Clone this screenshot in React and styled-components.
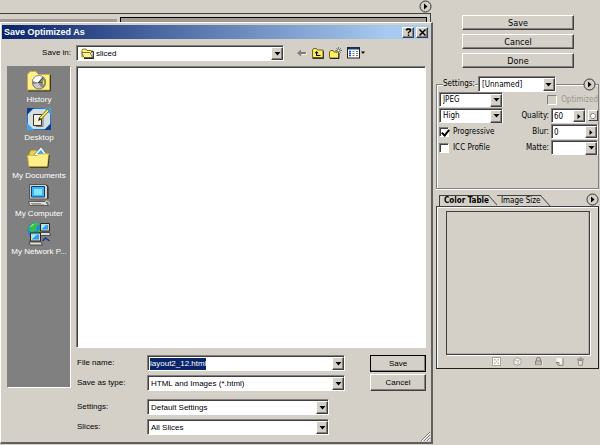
import React, { useEffect, useRef } from 'react';
import styled, { createGlobalStyle, css } from 'styled-components';

const App = () => (
  <Page>
    <GlobalStyle />
    <Preview>
      <PreviewHeader>
        <RoundButton aria-label="Preview menu"><PlayIcon /></RoundButton>
      </PreviewHeader>
      <Strip>
        <StripRuler />
        <StripCanvas />
      </Strip>
      <SaveDialog />
    </Preview>
    <Side>
      <ActionList>
        <ActionButton>Save</ActionButton>
        <ActionButton>Cancel</ActionButton>
        <ActionButton>Done</ActionButton>
      </ActionList>
      <SettingsPanel />
      <ColorPanel />
    </Side>
  </Page>
);

const SaveDialog = () => {
  const fileName = useRef(null);

  useEffect(() => {
    fileName.current.focus();
    fileName.current.select();
  }, []);

  return (
    <Dialog role="dialog" aria-labelledby="dialog-title">
      <TitleBar>
        <Title id="dialog-title">Save Optimized As</Title>
        <TitleButton aria-label="Help"><HelpGlyph /></TitleButton>
        <TitleButton aria-label="Close"><CloseGlyph /></TitleButton>
      </TitleBar>
      <LookIn>
        <LookInLabel htmlFor="save-in">Save in:</LookInLabel>
        <LookInBox>
          <FolderIcon />
          <Select id="save-in"><option>sliced</option></Select>
          <DropArrow />
        </LookInBox>
        <Tools>
          <ToolButton aria-label="Back"><BackIcon /></ToolButton>
          <ToolButton aria-label="Up one level"><UpIcon /></ToolButton>
          <ToolButton aria-label="New folder"><NewFolderIcon /></ToolButton>
          <ToolButton aria-label="Views"><ViewIcon /></ToolButton>
        </Tools>
      </LookIn>
      <DialogBody>
        <Places>
          <Place><HistoryIcon />History</Place>
          <Place><DesktopIcon />Desktop</Place>
          <Place><DocumentsIcon />My Documents</Place>
          <Place><ComputerIcon />My Computer</Place>
          <Place><NetworkIcon />My Network P...</Place>
        </Places>
        <DialogMain>
          <FileList />
          <FormArea>
            <Fields>
              <Field>
                <FieldLabel htmlFor="file-name">File name:</FieldLabel>
                <Combo>
                  <TextInput id="file-name" ref={fileName} defaultValue="layout2_12.html" />
                  <DropArrow />
                </Combo>
              </Field>
              <Field>
                <FieldLabel htmlFor="save-type">Save as type:</FieldLabel>
                <Combo>
                  <Select id="save-type"><option>HTML and Images (*.html)</option></Select>
                  <DropArrow />
                </Combo>
              </Field>
              <Field narrow first>
                <FieldLabel htmlFor="settings">Settings:</FieldLabel>
                <Combo>
                  <Select id="settings"><option>Default Settings</option></Select>
                  <DropArrow />
                </Combo>
              </Field>
              <Field narrow>
                <FieldLabel htmlFor="slices">Slices:</FieldLabel>
                <Combo>
                  <Select id="slices"><option>All Slices</option></Select>
                  <DropArrow />
                </Combo>
              </Field>
            </Fields>
            <DialogButtons>
              <DialogButton primary>Save</DialogButton>
              <DialogButton>Cancel</DialogButton>
            </DialogButtons>
          </FormArea>
        </DialogMain>
      </DialogBody>
      <Grip viewBox="0 0 9 9">
        <path d="M0 9L9 0M3 9L9 3M6 9L9 6" stroke="#808080" />
        <path d="M1 9L9 1M4 9L9 4M7 9L9 7" stroke="#fff" />
      </Grip>
    </Dialog>
  );
};

const SettingsPanel = () => (
  <Group>
    <GroupHead>
      <SmallLabel htmlFor="preset">Settings:</SmallLabel>
      <PresetCombo>
        <Select id="preset"><option>[Unnamed]</option></Select>
        <DropArrow />
      </PresetCombo>
      <GroupRule />
      <RoundButton aria-label="Settings menu"><PlayIcon /></RoundButton>
    </GroupHead>
    <GroupBody>
      <OptionColumn>
        <OptionCombo>
          <Select aria-label="Format"><option>JPEG</option></Select>
          <DropArrow />
        </OptionCombo>
        <OptionCombo>
          <Select aria-label="Compression"><option>High</option></Select>
          <DropArrow />
        </OptionCombo>
        <Check><CheckBox type="checkbox" defaultChecked />Progressive</Check>
        <Check><CheckBox type="checkbox" />ICC Profile</Check>
      </OptionColumn>
      <ValueGrid>
        <Check disabled wide><CheckBox type="checkbox" disabled />Optimized</Check>
        <SmallLabel htmlFor="quality">Quality:</SmallLabel>
        <ValueRow>
          <OptionCombo>
            <TextInput id="quality" defaultValue="60" />
            <Stepper aria-label="Quality slider"><RightGlyph /></Stepper>
          </OptionCombo>
          <MaskButton aria-label="Quality mask"><MaskGlyph /></MaskButton>
        </ValueRow>
        <SmallLabel htmlFor="blur">Blur:</SmallLabel>
        <OptionCombo>
          <TextInput id="blur" defaultValue="0" />
          <Stepper aria-label="Blur slider"><RightGlyph /></Stepper>
        </OptionCombo>
        <SmallLabel htmlFor="matte">Matte:</SmallLabel>
        <OptionCombo>
          <Select id="matte"><option></option></Select>
          <DropArrow />
        </OptionCombo>
      </ValueGrid>
    </GroupBody>
  </Group>
);

const ColorPanel = () => (
  <Palette>
    <TabBar role="tablist">
      <Tab role="tab" aria-selected="true" active>Color Table</Tab>
      <Tab role="tab" aria-selected="false">Image Size</Tab>
      <TabSpace />
      <RoundButton aria-label="Color table menu"><PlayIcon /></RoundButton>
    </TabBar>
    <PaletteBody>
      <Swatches />
      <PaletteTools>
        <PaletteButton aria-label="Transparent"><GridGlyph /></PaletteButton>
        <PaletteButton aria-label="Web shift"><CubeGlyph /></PaletteButton>
        <PaletteButton aria-label="Lock"><LockGlyph /></PaletteButton>
        <PaletteButton aria-label="New color"><NewGlyph /></PaletteButton>
        <PaletteButton aria-label="Delete"><TrashGlyph /></PaletteButton>
      </PaletteTools>
    </PaletteBody>
  </Palette>
);

const DropArrow = () => (
  <Arrow aria-hidden="true">
    <svg width="7" height="4" viewBox="0 0 7 4"><path d="M0.5 0h6L3.5 3.5z" fill="#000" /></svg>
  </Arrow>
);

const PlayIcon = () => (
  <svg width="13" height="13" viewBox="0 0 13 13">
    <circle cx="6.5" cy="6.5" r="5.5" fill="#d4d0c8" stroke="#333" />
    <path d="M5 3.5v6l3.5-3z" fill="#000" />
  </svg>
);

const HelpGlyph = () => (
  <svg width="7" height="8" viewBox="0 0 7 8">
    <path d="M1.5 2.5V1.5h1V1h2v.5h1v1.500L3.500 4.500V5.500M3.500 6.500V8" fill="none" stroke="#000" strokeWidth="1.400" />
  </svg>
);

const CloseGlyph = () => (
  <svg width="7" height="7" viewBox="0 0 7 7"><path d="M.5.5l6 6M6.500.5l-6 6" stroke="#000" strokeWidth="1.500" /></svg>
);

const RightGlyph = () => (
  <svg width="4" height="5" viewBox="0 0 4 5"><path d="M.5 0v5L3.500 2.500z" fill="#000" /></svg>
);

const MaskGlyph = () => (
  <svg width="8" height="8" viewBox="0 0 8 8">
    <circle cx="4" cy="4" r="2.500" fill="#fff" stroke="#555" strokeDasharray="1.500 .7" />
  </svg>
);

const FolderIcon = () => (
  <svg width="13" height="11" viewBox="0 0 13 11">
    <path d="M1 9.500V2l1-1h3l1 1.500h4.500V5" fill="#ffef84" stroke="#8c7a20" />
    <path d="M.7 4.500h8.300l2.500 5H3z" fill="#fff59c" stroke="#7b6b18" strokeWidth=".9" />
    <path d="M11 3l1.300 1v6.300H3" fill="none" stroke="#222" strokeWidth="1.200" />
  </svg>
);

const BackIcon = () => (
  <svg width="10" height="8" viewBox="0 0 10 8">
    <path d="M0 4l4-3.500V3h5v2H4v2.500z" fill="#808080" />
    <path d="M4.500 5.500H9.500V3.500" fill="none" stroke="#fff" strokeWidth=".6" />
  </svg>
);

const UpIcon = () => (
  <svg width="12" height="11" viewBox="0 0 12 11">
    <path d="M.5 9.500V2l1-1.500h3L5.500 2H11v7.500z" fill="#fff06a" stroke="#6b6412" />
    <path d="M.5 10.400h11.200V3" fill="none" stroke="#222" />
    <path d="M4.500 3L2.500 5.200h1.500V8h4.500V7H5.200V5.200h1.500z" fill="#111" />
  </svg>
);

const NewFolderIcon = () => (
  <svg width="13" height="12" viewBox="0 0 13 12">
    <path d="M.5 11V5l1-1.500h2.500L5 5h4.500v6z" fill="#fff06a" stroke="#746910" />
    <path d="M1 11.500h9V6" fill="none" stroke="#222" />
    <path d="M9.500 0v7M6.500 3.500h6.500M7.300 1.200l4.500 4.600M11.800 1.200L7.300 5.800" stroke="#555" strokeWidth=".8" />
    <circle cx="9.500" cy="3.500" r="1" fill="#fff" />
  </svg>
);

const ViewIcon = () => (
  <svg width="18" height="12" viewBox="0 0 18 12">
    <rect x=".5" y=".5" width="12" height="10.500" fill="#fff" stroke="#222" />
    <path d="M1 1.500h11" stroke="#123a7a" strokeWidth="2" />
    <path d="M2 4.500h2M2 6.500h2M2 8.500h2" stroke="#2452b0" strokeWidth="1.300" />
    <path d="M5.500 4.500h2M5.500 6.500h2M5.500 8.500h2M9 4.500h2M9 6.500h2M9 8.500h2" stroke="#777" />
    <path d="M14 4.500h4L16 7z" fill="#000" />
  </svg>
);

const HistoryIcon = () => (
  <svg width="24" height="22" viewBox="0 0 24 22">
    <path d="M.5 20V4.500L3 1.500h6l2.500 3h11V20z" fill="#fff08a" stroke="#c8b040" />
    <path d="M1 21h22.500V5" fill="none" stroke="#3c3820" />
    <circle cx="12" cy="12.300" r="7" fill="#8c8c8c" />
    <path d="M5.500 11a6.500 6.500 0 0 1 10-4.500L11 12.500z" fill="#fff" />
    <path d="M6 14.500a6.500 6.500 0 0 0 9 3.500l-4-5z" fill="#c8c8c8" />
    <circle cx="12" cy="12.300" r="6.700" fill="none" stroke="#777" strokeWidth=".7" />
    <path d="M11.500 12.500L16 8M11 12.500h6" stroke="#444" />
    <path d="M14.500 12l3-2.500 1.500 3-2.500 3z" fill="#9aa018" />
    <path d="M16.500 10.500v4" stroke="#e8e060" />
  </svg>
);

const DesktopIcon = () => (
  <svg width="24" height="22" viewBox="0 0 24 22">
    <rect width="24" height="22" fill="#1c79d8" />
    <path d="M0 0h7L0 7zM24 22h-7l7-7z" fill="#0c3b94" />
    <path d="M17 0h7v7zM0 15v7h7z" fill="#39a8f4" />
    <path d="M6 1L1 6v10l5 5h12l5-5V6l-5-5z" fill="#d3dfe0" />
    <path d="M6.500 6.500h8v11h-8z" fill="#f6f2d8" stroke="#333" />
    <path d="M9 18.500h7V8" fill="none" stroke="#777" />
    <path d="M11.500 12.500l1-3L20.500 1l2 1.500-8 8.500z" fill="#ffe84c" stroke="#514a16" strokeWidth=".8" />
    <path d="M11.500 12.500l1-3 1.500 1.500z" fill="#111" />
  </svg>
);

const DocumentsIcon = () => (
  <svg width="24" height="22" viewBox="0 0 24 22">
    <path d="M2 19V7l2-3h6l2 3h9v12z" fill="#e8cf55" stroke="#9b8528" />
    <path d="M6 10L14 .8 21 10z" fill="#f4fbff" stroke="#527894" strokeWidth=".8" />
    <path d="M10 8l4-4 3 4z" fill="#3aa1ea" />
    <path d="M.7 9.500h10l1.500-1.500h9.500L20.500 20.500H2z" fill="#fff08c" stroke="#d5bd42" />
    <path d="M2.500 21.300h18.500L22.300 9" fill="none" stroke="#3d381a" />
  </svg>
);

const ComputerIcon = () => (
  <svg width="24" height="24" viewBox="0 0 24 24">
    <path d="M2.500.5h16l2 1.500v13h-18z" fill="#d8d5c8" stroke="#555" />
    <path d="M19 1l2 1.500V15" fill="none" stroke="#222" />
    <path d="M4.500 2.500h13v10.500h-13z" fill="#3ab4fa" stroke="#0b407e" />
    <path d="M7 5h8v6H7z" fill="#83e5ff" />
    <path d="M7 15.500h9v2H7z" fill="#777" />
    <path d="M1.500 17.500h17l3 4H3z" fill="#e4e1d6" stroke="#444" strokeWidth=".8" />
    <path d="M4 19.500h10M5 20.700h12" stroke="#777" strokeWidth=".7" />
    <path d="M18 18c3-2 5 0 4 2.500" fill="none" stroke="#ddd" />
  </svg>
);

const NetworkIcon = () => (
  <svg width="24" height="24" viewBox="0 0 24 24">
    <circle cx="8.500" cy="8.500" r="8" fill="#2387d8" />
    <path d="M2 5c3-5 9-5 11-3L9 5l1 3-4 2-4-1zM4 12l5 0 1 4H6zM11 8l4-1 0 4-3 2z" fill="#38bd49" />
    <path d="M3.500 4.500L7 2" stroke="#c0f4b0" />
    <path d="M13.500 1.500h9v7.500h-9z" fill="#d8d5c8" stroke="#252525" />
    <path d="M15 3h6v4.500h-6z" fill="#2f9eed" />
    <path d="M15 3h4l-4 4z" fill="#9df0ff" />
    <path d="M12 10.500h10.500l1 3H13z" fill="#ddd" stroke="#333" strokeWidth=".8" />
    <path d="M3.500 11h10v8h-10z" fill="#d8d5c8" stroke="#252525" />
    <path d="M5 12.500h7v5H5z" fill="#2f9eed" />
    <path d="M5 12.500h5l-5 4.500z" fill="#9df0ff" />
    <path d="M2 20h12l1.500 3H3z" fill="#ddd" stroke="#333" strokeWidth=".8" />
    <path d="M15.500 19l3-3 4 3" fill="none" stroke="#123a94" strokeWidth="1.500" />
  </svg>
);

const GridGlyph = () => (
  <svg width="9" height="9" viewBox="0 0 9 9">
    <rect x=".5" y=".5" width="8" height="8" fill="#fff" stroke="#aaa69e" />
    <path d="M2 2h1.500v1.500H2zM5.500 2H7v1.500H5.500zM3.700 3.700h1.600v1.600H3.700zM2 5.500h1.500V7H2zM5.500 5.500H7V7H5.500z" fill="#b5b1a9" />
  </svg>
);

const CubeGlyph = () => (
  <svg width="9" height="9" viewBox="0 0 9 9">
    <path d="M.7 3L4 .8 8 2v4.500L5 8.500 1 7z" fill="#eee" stroke="#aaa69e" />
    <path d="M1 3l4 1.200L8 2M5 4.200v4" fill="none" stroke="#aaa69e" strokeWidth=".7" />
  </svg>
);

const LockGlyph = () => (
  <svg width="9" height="9" viewBox="0 0 9 9">
    <path d="M2.500 4V2.500a2 2 0 0 1 4 0V4" fill="none" stroke="#8c8880" strokeWidth="1.200" />
    <path d="M1.500 4h6v4h-6z" fill="#c0bcb4" stroke="#8c8880" />
    <path d="M1 8.800h7.500V4" fill="none" stroke="#fff" strokeWidth=".5" />
  </svg>
);

const NewGlyph = () => (
  <svg width="9" height="9" viewBox="0 0 9 9">
    <path d="M1.500 1h6.500v7H4L1.500 5.500z" fill="#f4f4f4" />
    <path d="M8 1v7.300H3.500L1 5.500h3v2.300" fill="none" stroke="#858179" />
  </svg>
);

const TrashGlyph = () => (
  <svg width="9" height="9" viewBox="0 0 9 9">
    <path d="M1 2.200h7M3.500 1h2.500" stroke="#959189" strokeWidth="1.200" />
    <path d="M2 3.500h5L6.300 8.300H2.800z" fill="#c7c3bb" stroke="#959189" />
    <path d="M3.500 4v3.500M5 4v3.500" stroke="#fff" strokeWidth=".7" />
  </svg>
);

const GlobalStyle = createGlobalStyle`
  * {
    box-sizing: border-box;
  }
  body {
    margin: 0;
    background: #d4d0c8;
    color: #000;
    font-family: "Liberation Sans", Arial, sans-serif;
    font-size: 8px;
    line-height: 12px;
  }
  button, input, select {
    margin: 0;
    padding: 0;
    border: 0;
    border-radius: 0;
    background: none;
    color: inherit;
    font: inherit;
  }
  svg {
    display: block;
    flex: none;
  }
`

const sunken = css`
  border: 1px solid;
  border-color: #808080 #fff #fff #808080;
  box-shadow: inset 1px 1px 0 #404040;
`
const raised = css`
  border: 1px solid;
  border-color: #fff #404040 #404040 #fff;
  box-shadow: inset -1px -1px 0 #808080;
  background: #d4d0c8;
`
const Page = styled.div`
  display: flex;
  min-height: 100vh;
`
const Preview = styled.main`
  display: flex;
  flex: 1;
  flex-direction: column;
  min-width: 0;
`
const PreviewHeader = styled.div`
  display: flex;
  justify-content: flex-end;
  height: 13px;
  padding-right: 1px;
`
const Strip = styled.div`
  display: flex;
  gap: 3px;
  height: 9px;
  margin-right: 2px;
  padding: 3px 3px 0 0;
  border-top: 1px solid #404040;
  border-right: 1px solid #404040;
`
const StripRuler = styled.div`
  flex: 0 0 117px;
  margin-top: 2px;
  background: #a09c94;
`
const StripCanvas = styled.div`
  flex: 1;
  border: 1px solid #000;
  border-bottom: 0;
  background: #a09c94;
`
const Dialog = styled.section`
  position: relative;
  display: flex;
  flex: 1;
  flex-direction: column;
  margin-bottom: 1px;
  padding: 2px 2px 7px 1px;
  border: 1px solid #fff;
  border-right: 2px solid #606060;
  border-bottom: 2px solid #606060;
`
const TitleBar = styled.header`
  display: flex;
  align-items: center;
  gap: 2px;
  height: 14px;
  padding: 0 1px 0 2px;
  background: linear-gradient(to right, #0a246a, #a6caf0 90%);
  color: #fff;
`
const Title = styled.h1`
  flex: 1;
  margin: 0;
  font-size: 9px;
  line-height: 14px;
`
const TitleButton = styled.button`
  ${raised}
  display: flex;
  align-items: center;
  justify-content: center;
  width: 12px;
  height: 11px;
`
const LookIn = styled.div`
  display: flex;
  align-items: center;
  padding: 6px 5px 5px;
`
const LookInLabel = styled.label`
  width: 64px;
  margin-right: 5px;
  text-align: right;
`
const Combo = styled.div`
  ${sunken}
  display: flex;
  align-items: center;
  flex: 1;
  min-width: 0;
  height: 16px;
  padding: 1px 0 0 1px;
  background: #fff;
`
const LookInBox = styled(Combo)`
  flex: 0 1 208px;
  padding-left: 4px;
`
const Select = styled.select`
  flex: 1;
  min-width: 0;
  height: 13px;
  padding: 0 2px;
  appearance: none;
  outline: 0;
`
const TextInput = styled.input`
  flex: 1;
  min-width: 0;
  height: 12px;
  padding: 0 1px;
  outline: 0;

  &::selection {
    background: #0a246a;
    color: #fff;
  }
`
const Arrow = styled.span`
  ${raised}
  display: flex;
  align-items: center;
  justify-content: center;
  flex: 0 0 12px;
  height: 13px;
  pointer-events: none;
`
const Tools = styled.div`
  display: flex;
  align-items: center;
  gap: 5px;
  margin-left: 13px;
`
const ToolButton = styled.button`
  display: block;
`
const DialogBody = styled.div`
  display: flex;
  flex: 1;
  gap: 5px;
  padding: 0 3px 0 5px;
`
const Places = styled.nav`
  ${sunken}
  display: flex;
  flex: 0 0 64px;
  flex-direction: column;
  gap: 2px;
  min-width: 0;
  margin-bottom: 47px;
  padding-top: 3px;
  background: #808080;
  box-shadow: none;
`
const Place = styled.button`
  display: flex;
  align-items: center;
  flex-direction: column;
  justify-content: space-between;
  height: 36px;
  color: #fff;
  white-space: nowrap;
`
const DialogMain = styled.div`
  display: flex;
  flex: 1;
  flex-direction: column;
  gap: 7px;
  min-width: 0;
`
const FileList = styled.div`
  ${sunken}
  flex: 1;
  min-height: 120px;
  background: #fff;
`
const FormArea = styled.div`
  display: flex;
  gap: 25px;
`
const Fields = styled.div`
  display: flex;
  flex: 1;
  flex-direction: column;
  gap: 4px;
`
const Field = styled.div.withConfig({
  shouldForwardProp: prop => !['narrow', 'first'].includes(prop)
})`
  display: flex;
  align-items: center;
  margin-top: ${props => props.first ? '4px' : '0'};
  padding-right: ${props => props.narrow ? '16px' : '0'};
`
const FieldLabel = styled.label`
  flex: 0 0 71px;
  padding-left: 1px;
`
const DialogButtons = styled.div`
  display: flex;
  flex: 0 0 56px;
  flex-direction: column;
  gap: 2px;
`
const DialogButton = styled.button.withConfig({
  shouldForwardProp: prop => prop !== 'primary'
})`
  ${raised}
  height: 17px;
  outline: ${props => props.primary ? '1px solid #000' : '0'};
  outline-offset: -1px;
`
const Grip = styled.svg`
  position: absolute;
  right: 1px;
  bottom: 1px;
  width: 9px;
  height: 9px;
`
const Side = styled.aside`
  flex: 0 0 167px;
  padding: 15px 1px 0 3px;
  font-family: "DejaVu Sans Condensed", "DejaVu Sans", sans-serif;
  font-size: 8px;
  line-height: 10px;
`
const ActionList = styled.div`
  display: flex;
  flex-direction: column;
  gap: 4px;
  margin: 0 25px 8px 26px;
`
const ActionButton = styled.button`
  ${raised}
  height: 15px;
  font-size: 9px;
  line-height: 10px;
`
const RoundButton = styled.button`
  display: block;
  flex: none;
`
const Group = styled.section`
  display: flex;
  flex-direction: column;
  height: 113px;
  margin-bottom: 4px;
`
const GroupHead = styled.div`
  display: flex;
  align-items: center;
  gap: 3px;
  height: 16px;
  margin-bottom: -8px;
  padding: 0 3px 0 7px;
  z-index: 1;
`
const SmallLabel = styled.label`
  background: #d4d0c8;
  text-align: right;
`
const PresetCombo = styled(Combo)`
  flex: 0 0 78px;
`
const GroupRule = styled.span`
  flex: 1;
`
const GroupBody = styled.div`
  display: flex;
  flex: 1;
  justify-content: space-between;
  padding: 7px 0 0 2px;
  border: 1px solid #808080;
  box-shadow: inset 1px 1px 0 #fff, 0 1px 0 #fff;
`
const OptionColumn = styled.div`
  display: flex;
  flex: 0 0 64px;
  flex-direction: column;
  gap: 1px;
`
const OptionCombo = styled(Combo)`
  flex: 0 0 15px;
  height: 15px;
`
const Check = styled.label.withConfig({
  shouldForwardProp: prop => !['disabled', 'wide'].includes(prop)
})`
  display: flex;
  align-items: center;
  gap: 4px;
  height: 15px;
  grid-column: ${props => props.wide ? '1 / -1' : 'auto'};
  justify-self: ${props => props.wide ? 'end' : 'auto'};
  color: ${props => props.disabled ? '#9a968e' : '#000'};
  white-space: nowrap;
`
const CheckBox = styled.input`
  ${sunken}
  flex: none;
  width: 10px;
  height: 10px;
  appearance: none;
  background: #fff;

  &:disabled {
    background: #d4d0c8;
    box-shadow: none;
  }

  &:checked::after {
    content: '';
    display: block;
    width: 3px;
    height: 6px;
    margin: 0 0 0 3px;
    border: solid #000;
    border-width: 0 2px 2px 0;
    transform: rotate(40deg);
  }
`
const ValueGrid = styled.div`
  display: grid;
  grid-template-columns: auto 47px;
  grid-auto-rows: 15px;
  align-content: start;
  align-items: center;
  gap: 1px 2px;
`
const ValueRow = styled.div`
  display: flex;
  align-items: center;
  gap: 2px;

  > div {
    flex: 1;
  }
`
const Stepper = styled.button`
  ${raised}
  display: flex;
  align-items: center;
  justify-content: center;
  flex: 0 0 12px;
  height: 12px;
`
const MaskButton = styled.button`
  ${raised}
  flex: none;
  width: 10px;
  height: 11px;
  box-shadow: none;
`
const Palette = styled.section`
  display: flex;
  flex-direction: column;
`
const TabBar = styled.div`
  display: flex;
  align-items: flex-end;
  padding-left: 3px;
`
const Tab = styled.button.withConfig({
  shouldForwardProp: prop => prop !== 'active'
})`
  position: relative;
  height: 11px;
  padding-left: 4px;
  margin-right: 8px;
  border-top: 1px solid #404040;
  border-left: ${props => props.active ? '1px solid #404040' : '0'};
  background: #d4d0c8;
  font-weight: ${props => props.active ? '700' : '400'};
  line-height: 10px;
  white-space: nowrap;

  &::after {
    content: '';
    position: absolute;
    top: -1px;
    right: -5px;
    width: 10px;
    height: 11px;
    border-top: 1px solid #404040;
    border-right: 1px solid #404040;
    transform: skewX(42deg);
  }
`
const TabSpace = styled.span`
  flex: 1;
`
const PaletteBody = styled.div`
  padding: 4px 8px 2px 9px;
  border: 1px solid;
  border-color: #404040 #202020 #202020 #404040;
  box-shadow: inset 1px 1px 0 #fff;
`
const Swatches = styled.div`
  aspect-ratio: 1;
  border: 1px solid #404040;
  box-shadow: inset -1px -1px 0 #b4b0a8, 1px 1px 0 #fff;
`
const PaletteTools = styled.div`
  display: flex;
  justify-content: flex-end;
  gap: 12px;
  padding: 2px 5px 0 0;
`
const PaletteButton = styled.button`
  display: block;
`

export default App;
